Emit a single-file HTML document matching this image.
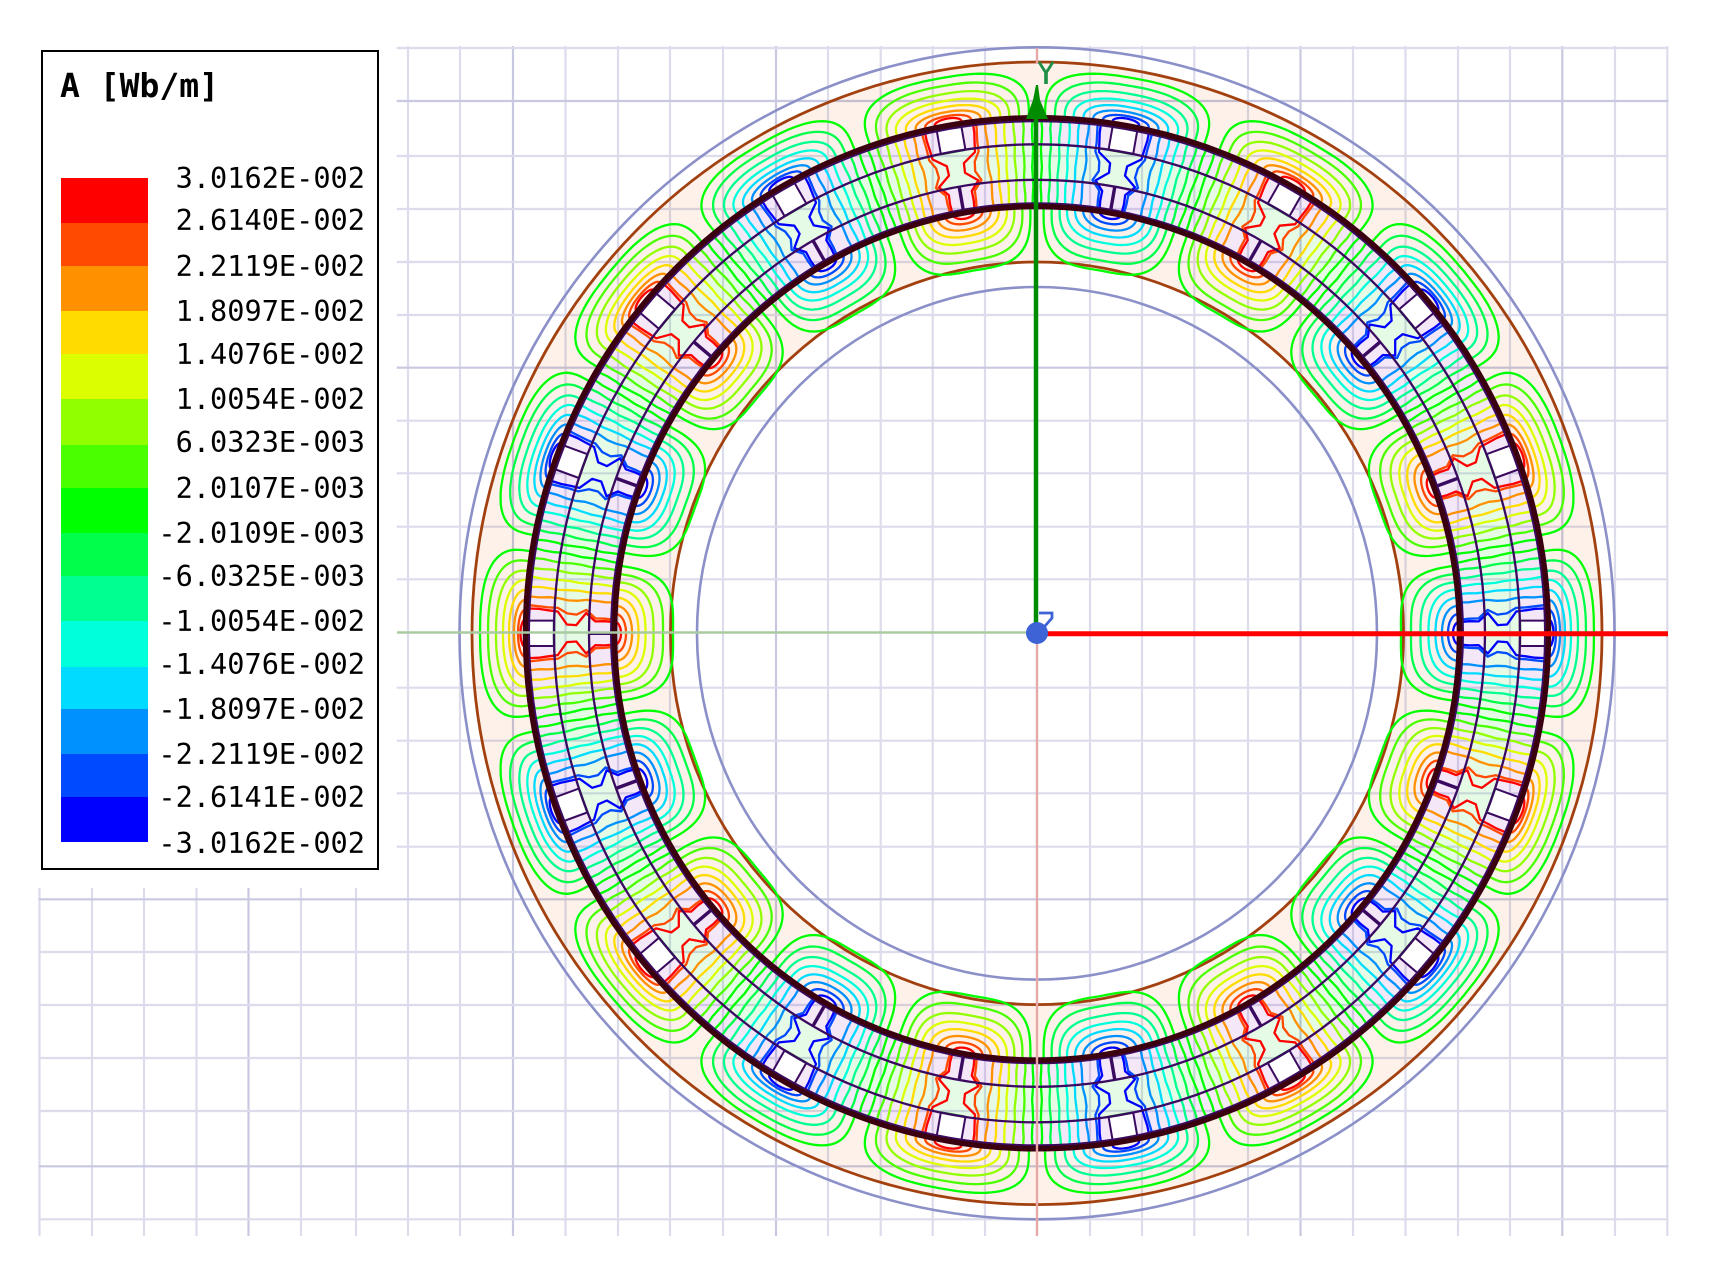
<!DOCTYPE html>
<html lang="en">
<head>
<meta charset="utf-8">
<title>A [Wb/m]</title>
<style>
html,body{margin:0;padding:0;background:#fff;}
#page{position:relative;width:1715px;height:1262px;overflow:hidden;background:#fff;}
#plot{position:absolute;left:0;top:0;}
#legend{position:absolute;left:41px;top:50px;width:334px;height:816px;border:2px solid #000;background:#fff;}
.sw{position:absolute;left:61px;width:87px;}
.lb{position:absolute;right:1350px;height:0;line-height:0;font-family:"DejaVu Sans Mono","Liberation Mono",monospace;font-size:28.6px;color:#000;white-space:pre;}
#title{position:absolute;left:60px;top:86px;height:0;line-height:0;font-family:"DejaVu Sans Mono","Liberation Mono",monospace;font-weight:bold;font-size:33px;color:#000;white-space:pre;}
</style>
</head>
<body>
<div id="page">
<svg id="plot" width="1715" height="1262" viewBox="0 0 1715 1262" xmlns="http://www.w3.org/2000/svg">
  <g id="fills">
    <ellipse cx="1037" cy="633.3" rx="565" ry="571.3" fill="#fdf1ea"/>
    <ellipse cx="1037" cy="633.3" rx="511.5" ry="515.5" fill="#f3e7f8"/>
    <ellipse cx="1037" cy="633.3" rx="483" ry="489" fill="#e6fbe6"/>
    <ellipse cx="1037" cy="633.3" rx="448" ry="453.5" fill="#f3e7f8"/>
    <ellipse cx="1037" cy="633.3" rx="423" ry="427" fill="#fdf1ea"/>
    <ellipse cx="1037" cy="633.3" rx="366.5" ry="371.3" fill="#fff"/>
  </g>
  <g id="grid" style="mix-blend-mode:multiply" fill="none"></g>
  <rect x="0" y="0" width="396.7" height="888" fill="#fff"/>
  <g fill="none">
    <ellipse cx="1037" cy="633.3" rx="577.5" ry="586" stroke="#8b90c8" stroke-width="2.6"/>
    <ellipse cx="1037" cy="633.3" rx="340" ry="346.3" stroke="#8b90c8" stroke-width="2.6"/>
    <ellipse cx="1037" cy="633.3" rx="565" ry="571.3" stroke="#a2410f" stroke-width="2.8"/>
    <ellipse cx="1037" cy="633.3" rx="366.5" ry="371.3" stroke="#a2410f" stroke-width="2.8"/>
  </g>
  <g id="contours" fill="none" stroke-width="2.3" stroke-linejoin="round"></g>
  <g id="slots"></g>
  <g fill="none">
    <ellipse cx="1037" cy="633.3" rx="483" ry="489" stroke="#3a0a60" stroke-width="2.3"/>
    <ellipse cx="1037" cy="633.3" rx="448" ry="453.5" stroke="#3a0a60" stroke-width="2.3"/>
    <ellipse cx="1037" cy="633.3" rx="508" ry="512" stroke="#3a0a60" stroke-width="2"/>
    <ellipse cx="1037" cy="633.3" rx="426" ry="430" stroke="#3a0a60" stroke-width="2"/>
    <ellipse cx="1037" cy="633.3" rx="511.5" ry="515.5" stroke="#3a0010" stroke-width="5.5"/>
    <ellipse cx="1037" cy="633.3" rx="422.5" ry="426.8" stroke="#3a0010" stroke-width="5.5"/>
  </g>
  <!-- axes -->
  <line x1="397" y1="632.5" x2="1037" y2="632.5" stroke="#a8cba0" stroke-width="2.4"/>
  <line x1="1037" y1="48" x2="1037" y2="64" stroke="#e8a8a8" stroke-width="2.4"/>
  <line x1="1037" y1="633" x2="1037" y2="1236" stroke="#e8a8a8" stroke-width="2.4"/>
  <line x1="1036" y1="119" x2="1036" y2="630" stroke="#008c00" stroke-width="4.5"/>
  <polygon points="1036,85 1038,85 1040,100 1048,119 1026,119 1033,100" fill="#008c00"/>
  <polyline points="1039,62 1046,73 1053,62" fill="none" stroke="#1c8f44" stroke-width="2.8"/>
  <line x1="1046" y1="73" x2="1046" y2="84" stroke="#1c8f44" stroke-width="3.6"/>
  <line x1="1037" y1="633.7" x2="1668" y2="633.7" stroke="#ff0000" stroke-width="5"/>
  <circle cx="1037" cy="633" r="11" fill="#3d63d6"/>
  <polyline points="1039,613 1052,613 1052,618 1045,626" fill="none" stroke="#3d63d6" stroke-width="2.8"/>
</svg>

<div id="legend"></div>
<div id="title">A [Wb/m]</div>

<div class="sw" style="top:178px;height:45px;background:#ff0000"></div>
<div class="sw" style="top:223px;height:43px;background:#ff4a00"></div>
<div class="sw" style="top:266px;height:45px;background:#ff9100"></div>
<div class="sw" style="top:311px;height:43px;background:#ffdb00"></div>
<div class="sw" style="top:354px;height:45px;background:#dbff00"></div>
<div class="sw" style="top:399px;height:46px;background:#91ff00"></div>
<div class="sw" style="top:445px;height:43px;background:#4aff00"></div>
<div class="sw" style="top:488px;height:45px;background:#00ff00"></div>
<div class="sw" style="top:533px;height:43px;background:#00ff4a"></div>
<div class="sw" style="top:576px;height:45px;background:#00ff91"></div>
<div class="sw" style="top:621px;height:46px;background:#00ffdb"></div>
<div class="sw" style="top:667px;height:42px;background:#00dbff"></div>
<div class="sw" style="top:709px;height:45px;background:#0091ff"></div>
<div class="sw" style="top:754px;height:43px;background:#004aff"></div>
<div class="sw" style="top:797px;height:45px;background:#0000ff"></div>

<div class="lb" style="top:178px">3.0162E-002</div>
<div class="lb" style="top:220px">2.6140E-002</div>
<div class="lb" style="top:266px">2.2119E-002</div>
<div class="lb" style="top:311px">1.8097E-002</div>
<div class="lb" style="top:354px">1.4076E-002</div>
<div class="lb" style="top:399px">1.0054E-002</div>
<div class="lb" style="top:442px">6.0323E-003</div>
<div class="lb" style="top:488px">2.0107E-003</div>
<div class="lb" style="top:533px">-2.0109E-003</div>
<div class="lb" style="top:576px">-6.0325E-003</div>
<div class="lb" style="top:621px">-1.0054E-002</div>
<div class="lb" style="top:664px">-1.4076E-002</div>
<div class="lb" style="top:709px">-1.8097E-002</div>
<div class="lb" style="top:754px">-2.2119E-002</div>
<div class="lb" style="top:797px">-2.6141E-002</div>
<div class="lb" style="top:843px">-3.0162E-002</div>
</div>

<script>
(function(){
var NS="http://www.w3.org/2000/svg";
function el(parent,tag,attrs){var e=document.createElementNS(NS,tag);for(var a in attrs)e.setAttribute(a,attrs[a]);parent.appendChild(e);return e;}
/* grid */
var gx=[39.5,92,144,196.5,248.5,301,356,408,460,513,565.5,618,670,723,776,828,880.7,932.7,985,1037,1090,1142,1194.3,1248,1300.5,1353,1405.5,1458,1510,1562.3,1615,1667.3];
var gxd={248.5:1,513:1,776:1,1300.5:1,1562.3:1};
var gy=[48,101,156,209,262,315,367.7,420.7,473.3,526.7,579.3,687.7,740.7,793.3,846.7,899.3,952,1005,1058,1111,1166.3,1219.3];
var gyd={101:1,367.7:1,899.3:1,1166.3:1};
var grid=document.getElementById("grid");
gx.forEach(function(x){if(x===1037)return;el(grid,"line",{x1:x,y1:46,x2:x,y2:1236,stroke:gxd[x]?"#c8c8e0":"#dcdcec","stroke-width":2.2});});
gy.forEach(function(y){el(grid,"line",{x1:38.5,y1:y,x2:1668.5,y2:y,stroke:gyd[y]?"#c8c8e0":"#dcdcec","stroke-width":2.2});});

/* contours */
var cx=1037,cy=633.3,k=1.012;
var L=[0.0667,0.2,0.333,0.467,0.6,0.733,0.867,0.91];
var POS=["#00ff00","#4aff00","#91ff00","#dbff00","#ffdb00","#ff9100","#ff4a00","#ff0000"];
var NEG=["#00ff00","#00ff4a","#00ff91","#00ffdb","#00dbff","#0091ff","#004aff","#0000ff"];
/* lobe half-widths (deg) and radial heights (px) measured per level */
var AW=[9.1,8.0,6.9,5.9,4.8,3.7,2.6,1.5];
var BO=[45,37,29,22,16,11,7,4.5];
var BI=[58,48,38.5,30.5,23.5,17,11,6];
var NP=[3.2,2.9,2.7,2.5,2.35,2.2,2.1,2.0];
var D2R=Math.PI/180;
function pt(r,a){return (cx+r*Math.cos(a*D2R)).toFixed(1)+" "+(cy-k*r*Math.sin(a*D2R)).toFixed(1);}
function poly(list,pole,side){var s="";for(var i=0;i<list.length;i++){s+=(i?"L":"M")+pt(list[i][0],pole+side*10*(1-list[i][1]));}return s;}
function lobe(i,r0,dir,b){
  var pts=[],N=22,n=NP[i],a=AW[i];
  for(var j=0;j<=N;j++){
    var t=(Math.PI/2)*(1-j/N);
    var off=a*Math.pow(Math.cos(t),2/n);
    var dr=b*Math.pow(Math.sin(t),2/n);
    pts.push([r0+dir*dr,1-off/10]);
  }
  return pts;
}
function band(l){
  var pts=[],N=9;
  for(var i=0;i<=N;i++){
    var r=423+85*i/N,u=(r-465.5)/17.5,H=0.93+0.6*Math.pow(u,4);
    var v=Math.pow(Math.pow(l,-8)-Math.pow(H,-8),-1/8);
    var T=Math.min(v/1.25,1);
    if(r<446&&l>0.8)T=Math.min(T+0.12,0.93);
    var w=0.007*Math.sin(i*1.7+l*17);
    pts.push([r,Math.max(0,Math.min(1,T+w))]);
  }
  return pts;
}
var con=document.getElementById("contours");
L.forEach(function(l,i){
  var outer=lobe(i,512,1,BO[i]);
  var inner=lobe(i,422,-1,BI[i]);
  var b=band(l);
  var dp="",dn="";
  for(var p=0;p<18;p++){
    var a=p*20,s="";
    [1,-1].forEach(function(sd){
      s+=poly(outer,a,sd)+poly(inner,a,sd)+poly(b,a,sd);
    });
    if(p%2)dp+=s;else dn+=s;
  }
  el(con,"path",{d:dp,stroke:POS[i]});
  el(con,"path",{d:dn,stroke:NEG[i]});
});

/* slots */
var sl=document.getElementById("slots");
for(var p=0;p<18;p++){
  var a=p*20;
  var g=el(sl,"g",{transform:"translate("+cx+" "+cy+") scale(1 "+k+") rotate("+(-a)+")"});
  el(g,"rect",{x:483,y:-12.5,width:26,height:25,fill:"#fff"});
  el(g,"line",{x1:483,y1:-12.5,x2:509,y2:-12.5,stroke:"#3a0a60","stroke-width":2});
  el(g,"line",{x1:483,y1:12.5,x2:509,y2:12.5,stroke:"#3a0a60","stroke-width":2});
  el(g,"line",{x1:483,y1:-12.5,x2:483,y2:12.5,stroke:"#0f8a1a","stroke-width":2.4});
  el(g,"line",{x1:425,y1:0,x2:448,y2:0,stroke:"#3a0a60","stroke-width":3.4});
}
})();
</script>
</body>
</html>
